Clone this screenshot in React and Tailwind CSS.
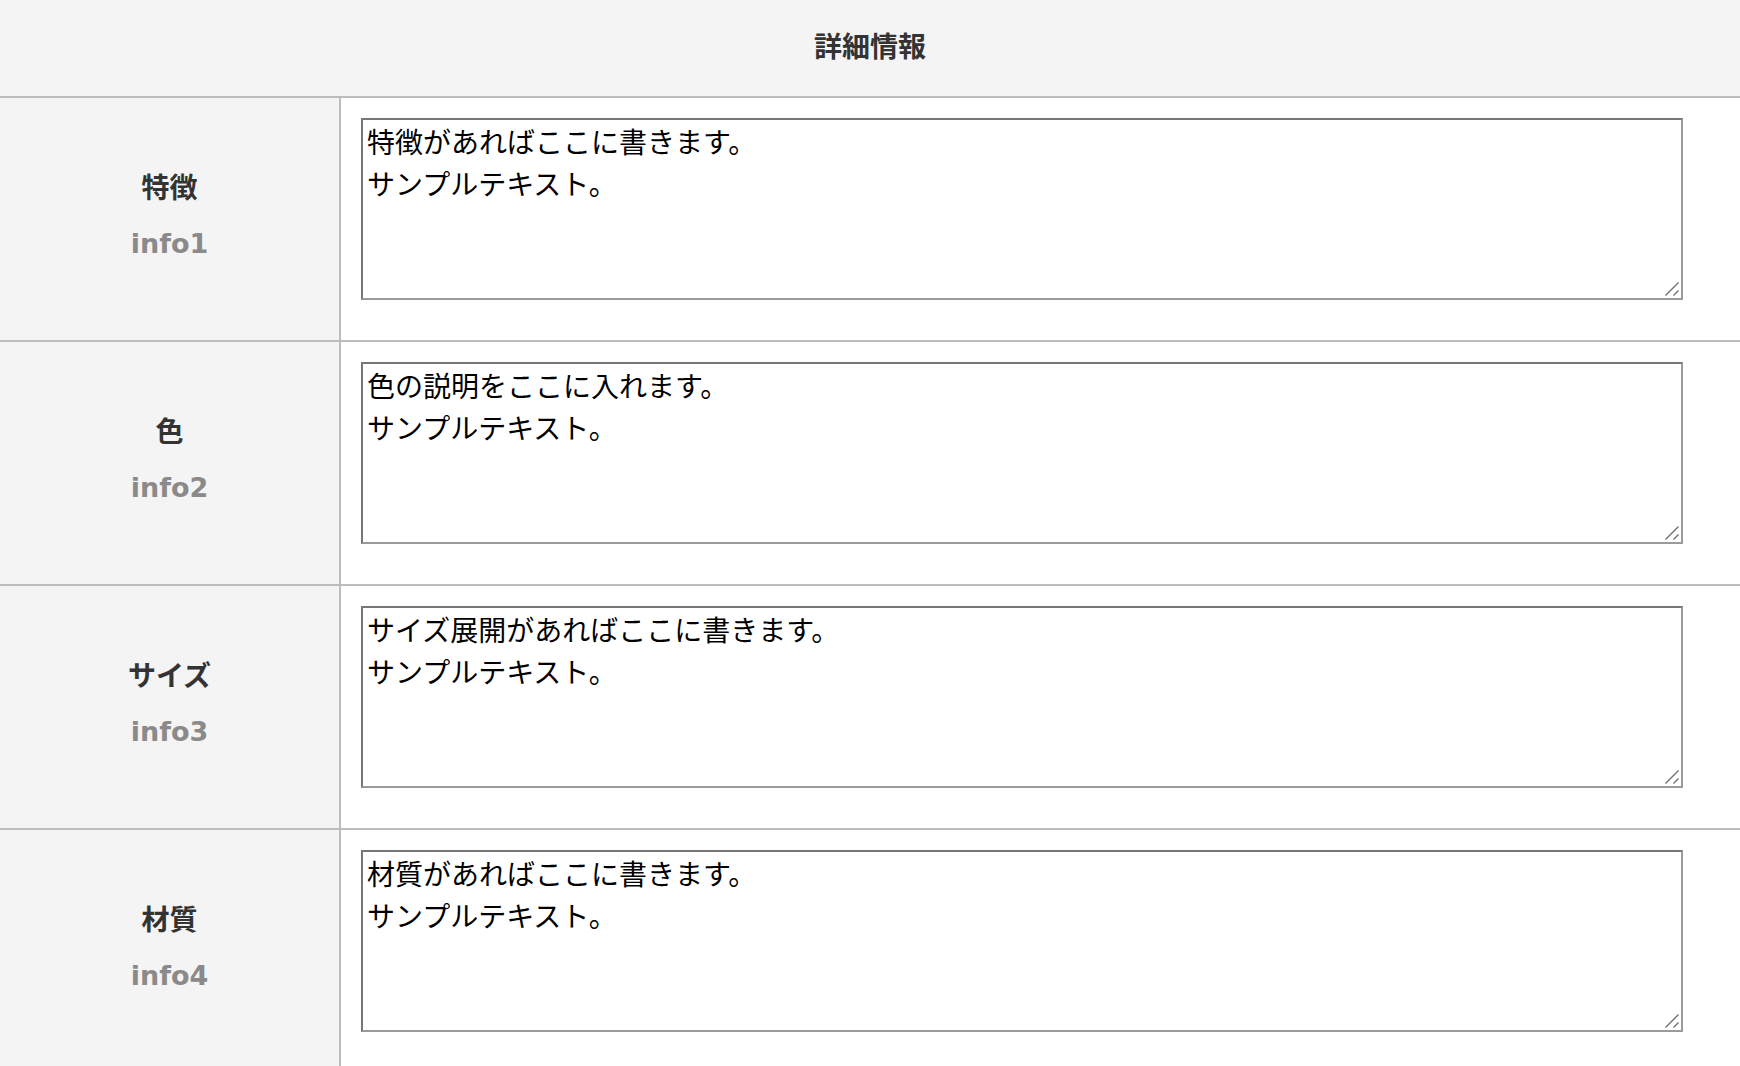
import React from "react";

const rows = [
  { label: "特徴", key: "info1", text: "特徴があればここに書きます。\nサンプルテキスト。" },
  { label: "色", key: "info2", text: "色の説明をここに入れます。\nサンプルテキスト。" },
  { label: "サイズ", key: "info3", text: "サイズ展開があればここに書きます。\nサンプルテキスト。" },
  { label: "材質", key: "info4", text: "材質があればここに書きます。\nサンプルテキスト。" },
];

const jp = { fontFamily: '"Noto Sans CJK JP", "Noto Sans", sans-serif' };

function Row({ row }) {
  return (
    <div className="flex border-b-2 border-[#bcbcbc]">
      <div className="w-[339px] shrink-0 bg-[#f4f4f4] flex flex-col items-center justify-center gap-[18px] pb-2 h-[242px]">
        <div className="text-[28px] font-bold leading-[40px] text-[#333]">{row.label}</div>
        <div
          className="text-[27px] font-bold leading-[40px] text-[#8a8a8a]"
          style={{ fontFamily: '"DejaVu Sans", sans-serif' }}
        >
          {row.key}
        </div>
      </div>
      <div className="w-[2px] shrink-0 bg-[#bcbcbc]" />
      <div className="flex-1 bg-white pt-5 pl-5">
        <div className="relative w-[1322px] h-[182px]">
          <textarea
            readOnly
            defaultValue={row.text}
            className="w-full h-full resize-none border-2 border-t-[#767676] border-l-[#767676] border-r-[#9a9a9a] border-b-[#9a9a9a] bg-white px-[4px] py-0 text-[28px] leading-[42px] text-black outline-none"
            style={jp}
          />
          <svg className="absolute right-[3px] bottom-[3px]" width="16" height="16" viewBox="0 0 16 16">
            <line x1="1.5" y1="14.5" x2="14.5" y2="1.5" stroke="#6b6b6b" strokeWidth="1.3" />
            <line x1="9.5" y1="14.5" x2="14.5" y2="9.5" stroke="#6b6b6b" strokeWidth="1.3" />
          </svg>
        </div>
      </div>
    </div>
  );
}

export default function App() {
  return (
    <div className="w-[1740px] bg-white" style={jp}>
      <div className="h-[98px] bg-[#f4f4f4] flex items-center justify-center pb-1.5 border-b-2 border-[#bcbcbc]">
        <h1 className="text-[28px] font-bold text-[#333] leading-none">詳細情報</h1>
      </div>
      {rows.map((r) => (
        <Row key={r.key} row={r} />
      ))}
    </div>
  );
}
